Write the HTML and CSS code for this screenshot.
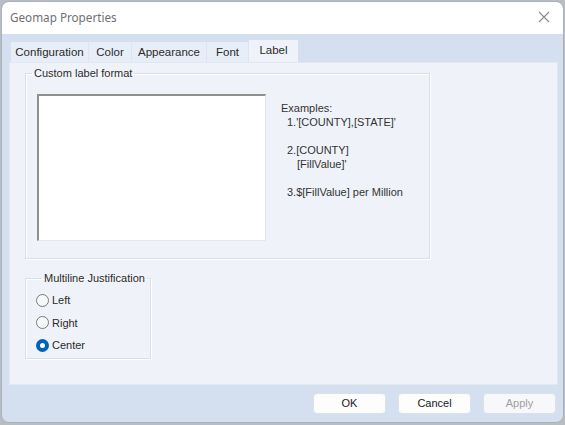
FILE: index.html
```html
<!DOCTYPE html>
<html>
<head>
<meta charset="utf-8">
<link rel="stylesheet" href="styles.css">
</head>
<body>
<div class="window">
  <div class="titlebar">
    <span class="title">Geomap Properties</span>
    <svg class="close" width="12" height="12" viewBox="0 0 12 12"><path d="M1 1L11 11M11 1L1 11" stroke="#8a8a8a" stroke-width="1.1" fill="none"/></svg>
  </div>
  <div class="content">
    <div class="tabs">
      <div class="tab t-config">Configuration</div>
      <div class="tab t-color">Color</div>
      <div class="tab t-appear">Appearance</div>
      <div class="tab t-font">Font</div>
      <div class="tab t-label active">Label</div>
    </div>
    <div class="page">
      <fieldset class="group group-format">
        <legend>Custom label format</legend>
        <div class="format-row">
          <div class="textbox"></div>
          <div class="examples">
            <div>Examples:</div>
            <div class="ex">1.'[COUNTY],[STATE]'</div>
            <div class="blank"></div>
            <div class="ex">2.[COUNTY]</div>
            <div class="ex2">[FillValue]'</div>
            <div class="blank"></div>
            <div class="ex">3.$[FillValue] per Million</div>
          </div>
        </div>
      </fieldset>
      <fieldset class="group group-just">
        <legend>Multiline Justification</legend>
        <div class="radio"><span class="dot"></span>Left</div>
        <div class="radio"><span class="dot"></span>Right</div>
        <div class="radio"><span class="dot checked"></span>Center</div>
      </fieldset>
    </div>
    <div class="buttons">
      <div class="btn">OK</div>
      <div class="btn">Cancel</div>
      <div class="btn disabled">Apply</div>
    </div>
  </div>
</div>
</body>
</html>
```
FILE: styles.css
```css
html, body {
  margin: 0;
  padding: 0;
}
body {
  background: #b9bcc2;
  width: 565px;
  height: 425px;
  overflow: hidden;
  font-family: "Noto Sans", "DejaVu Sans", sans-serif;
}
.window {
  margin: 1px 0 0 1px;
  width: 561px;
  height: 420px;
  border: 1px solid #a9b2c0;
  border-radius: 8px;
  overflow: hidden;
  display: flex;
  flex-direction: column;
}
.titlebar {
  height: 32px;
  flex: none;
  background: #ffffff;
  display: flex;
  align-items: center;
  justify-content: space-between;
  padding: 0 10px 0 8px;
}
.title {
  font-size: 11.7px;
  color: #707070;
  margin-top: -2px;
}
.close {
  margin-right: 3px;
  margin-top: -2px;
}
.content {
  flex: 1;
  background: #d4dfef;
  display: flex;
  flex-direction: column;
  padding: 6px 5px 0 7px;
  font-family: "Liberation Sans", sans-serif;
  font-size: 11px;
  color: #2a2a2a;
}
.tabs {
  display: flex;
  flex: none;
  height: 22px;
  align-items: flex-end;
  padding-left: 2px;
  font-size: 11.5px;
}
.tab {
  height: 20px;
  line-height: 20px;
  text-align: center;
  background: #e8eef7;
  border-right: 1px solid #dde5f0;
  box-sizing: border-box;
}
.t-config { width: 78px; }
.t-color { width: 43px; }
.t-appear { width: 75px; }
.t-font { width: 42px; }
.t-label { width: 49px; }
.tab.active {
  height: 22px;
  line-height: 21px;
  background: #eff3f9;
  border-right: none;
}
.page {
  flex: none;
  height: 318px;
  background: #eff3f9;
  border: 1px solid #e1e8f2;
  padding: 3px 0 0 15px;
}
.group {
  margin: 0;
  border: 1px solid #d8dfe9;
  box-shadow: 1px 1px 0 #ffffff inset, 1px 1px 0 #fff;
  padding: 0;
  min-width: 0;
  box-sizing: border-box;
}
.group legend {
  padding: 0 2px;
  margin-left: 6px;
  line-height: 14px;
  white-space: nowrap;
}
.group-format {
  width: 405px;
  height: 193px;
}
.format-row {
  display: flex;
  padding: 14px 0 0 11px;
}
.textbox {
  width: 229px;
  height: 147px;
  background: #fff;
  border-top: 2px solid #8f8f8f;
  border-left: 2px solid #8f8f8f;
  border-right: 1px solid #e6e6e6;
  border-bottom: 1px solid #e6e6e6;
  box-sizing: border-box;
}
.examples {
  margin-left: 15px;
  padding-top: 7px;
  line-height: 14px;
  color: #333;
}
.ex { padding-left: 6px; }
.ex2 { padding-left: 16px; }
.blank { height: 14px; }
.group-just {
  width: 126px;
  height: 88px;
  margin-top: 12px;
  padding: 4px 0 0 10px;
}
.radio {
  display: flex;
  align-items: center;
  height: 22.5px;
}
.dot {
  width: 11px;
  height: 11px;
  border: 1px solid #7a7a7a;
  border-radius: 50%;
  background: #f7f8fa;
  margin-right: 3px;
  box-sizing: content-box;
}
.dot.checked {
  background: #ffffff;
  border: 4px solid #0063b8;
  width: 5px;
  height: 5px;
}
.buttons {
  flex: 1;
  display: flex;
  justify-content: flex-end;
  align-items: flex-start;
  padding-top: 8px;
  padding-right: 2px;
  gap: 12px;
}
.btn {
  width: 71px;
  height: 19px;
  line-height: 19px;
  text-align: center;
  background: #fdfdfd;
  border: 1px solid #dde1e7;
  border-radius: 4px;
  color: #1a1a1a;
}
.btn.disabled {
  background: #f6f8fb;
  color: #a0a0a0;
}
```
